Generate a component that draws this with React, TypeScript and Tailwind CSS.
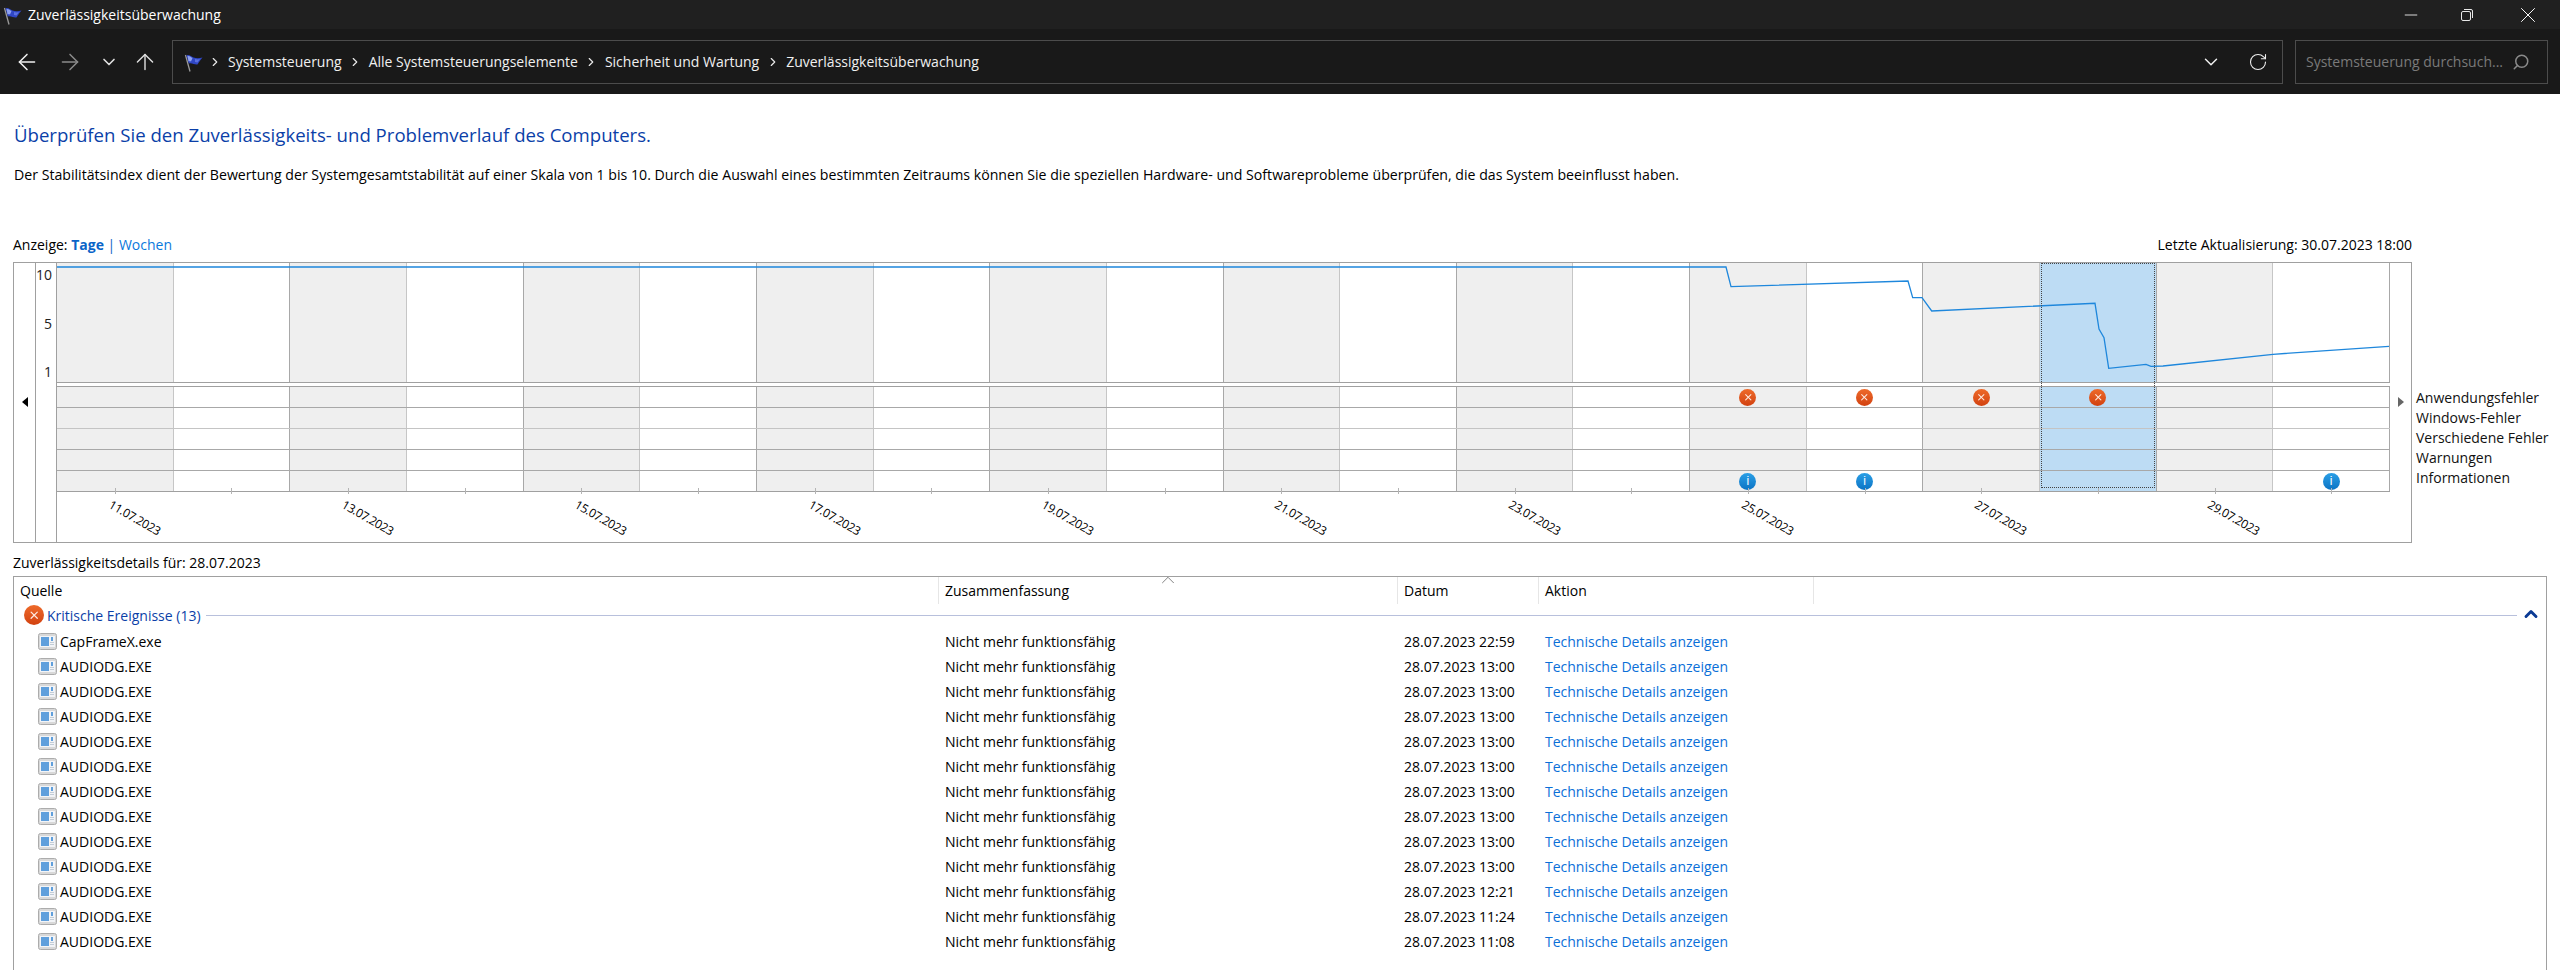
import { ChevronDown, ChevronUp, RotateCw, Search, ArrowLeft, ArrowRight, ArrowUp, Minus, X, ChevronRight } from "lucide-react";

const days = Array.from({ length: 20 }, (_, i) => i);
const dates: Record<number, string> = {
  0: "11.07.2023",
  2: "13.07.2023",
  4: "15.07.2023",
  6: "17.07.2023",
  8: "19.07.2023",
  10: "21.07.2023",
  12: "23.07.2023",
  14: "25.07.2023",
  16: "27.07.2023",
  18: "29.07.2023",
};

const rows = [
  ["CapFrameX.exe", "28.07.2023 22:59"],
  ["AUDIODG.EXE", "28.07.2023 13:00"],
  ["AUDIODG.EXE", "28.07.2023 13:00"],
  ["AUDIODG.EXE", "28.07.2023 13:00"],
  ["AUDIODG.EXE", "28.07.2023 13:00"],
  ["AUDIODG.EXE", "28.07.2023 13:00"],
  ["AUDIODG.EXE", "28.07.2023 13:00"],
  ["AUDIODG.EXE", "28.07.2023 13:00"],
  ["AUDIODG.EXE", "28.07.2023 13:00"],
  ["AUDIODG.EXE", "28.07.2023 13:00"],
  ["AUDIODG.EXE", "28.07.2023 12:21"],
  ["AUDIODG.EXE", "28.07.2023 11:24"],
  ["AUDIODG.EXE", "28.07.2023 11:08"],
];

function Flag({ size = 20 }: { size?: number }) {
  return (
    <svg width={size} height={size} viewBox="0 0 20 20">
      <path d="M2.5 3 L7 19.5" stroke="#9a9a9a" strokeWidth="1.3" />
      <path d="M3.5 3.5 C6 2 8 4.5 10.5 5.5 C13.5 6.5 16 6.5 19.5 5.5 C17.5 8 16 10 14.5 12.5 C11.5 13 9 10.5 5.8 11.5 Z" fill="#2f46c4" />
      <path d="M4.5 4 C6.5 3.5 8 5 9.5 6 L8 9.5 C7 9 6 9 5.5 9.5 Z" fill="#8ea2f2" />
      <path d="M12 7 C14 7.5 15.5 7.5 17 7 L14.5 10.5 L12 10 Z" fill="#5a70e0" />
    </svg>
  );
}

function ErrorDot({ size = 17 }: { size?: number }) {
  return (
    <div
      style={{ width: size, height: size }}
      className="flex items-center justify-center rounded-full bg-gradient-to-b from-[#ee6a2a] to-[#d2410f]"
    >
      <X size={size * 0.62} strokeWidth={2.4} className="text-[#fde9df]" />
    </div>
  );
}

function InfoDot() {
  return (
    <div className="flex h-[17px] w-[17px] items-center justify-center rounded-full bg-gradient-to-b from-[#2a9fe6] to-[#0b74c4] font-['Liberation_Sans',sans-serif] text-[12px] leading-none text-white">
      i
    </div>
  );
}

function AppIcon() {
  return (
    <svg width="19" height="17" viewBox="0 0 19 17">
      <rect x="0.5" y="0.5" width="18" height="16" rx="2" fill="#d8d8d8" stroke="#acacac" />
      <rect x="2" y="3" width="15" height="11" fill="#f2f4f7" />
      <rect x="3" y="4" width="8" height="9" fill="#5f9fdc" />
      <rect x="13" y="4" width="2" height="4" fill="#5f9fdc" />
      <rect x="12" y="9" width="4" height="1" fill="#c2ccd6" />
      <rect x="12" y="11" width="4" height="1" fill="#c2ccd6" />
    </svg>
  );
}

function Sep() {
  return <ChevronRight size={14} strokeWidth={2} className="mx-[6.5px] text-[#e8e8e8]" />;
}

function ChartRow({ errors = [], infos = [], border = "border-[#a8a8a8]" }: { errors?: number[]; infos?: number[]; border?: string }) {
  return (
    <div className={`grid h-[21px] grid-cols-[repeat(20,1fr)] border-b ${border}`}>
      {days.map((d) => (
        <div key={d} className={`flex items-center justify-center border-r ${d % 2 === 0 ? "border-[#c6c6c6]" : "border-[#a8a8a8]"} ${d === 17 ? "bg-[#bddcf4]" : d % 2 === 0 ? "bg-[#efefef]" : "bg-white"}`}>
          {errors.includes(d) && <ErrorDot />}
          {infos.includes(d) && <InfoDot />}
        </div>
      ))}
    </div>
  );
}

function Chart() {
  return (
    <div className="ml-[13px] flex">
      <div className="flex h-[281px] w-[2399px] border border-[#a0a0a0]">
        <div className="flex w-[22px] justify-center border-r border-[#a0a0a0] pt-[134px]">
          <div className="h-0 w-0 border-y-[5px] border-r-[6px] border-y-transparent border-r-black" />
        </div>
        <div className="w-[21px] border-r border-[#a0a0a0] pr-[4px] text-right text-[14px] leading-[48.5px] text-[#222]">
          <div className="-mt-[12px]">10</div>
          <div>5</div>
          <div>1</div>
        </div>
        <div className="relative w-[2333px]">
          <div className="grid h-[120px] grid-cols-[repeat(20,1fr)] border-b border-[#a0a0a0]">
            {days.map((d) => (
              <div key={d} className={`border-r ${d % 2 === 0 ? "border-[#c6c6c6]" : "border-[#a8a8a8]"} ${d === 17 ? "bg-[#bddcf4]" : d % 2 === 0 ? "bg-[#efefef]" : "bg-white"}`} />
            ))}
          </div>
          <div className="h-[4px] border-b border-[#a0a0a0]" />
          <ChartRow errors={[14, 15, 16, 17]} />
          <ChartRow border="border-[#c4c4c4]" />
          <ChartRow />
          <ChartRow />
          <ChartRow infos={[14, 15, 19]} border="border-[#a0a0a0]" />
          <div className="grid h-[50px] grid-cols-[repeat(20,1fr)]">
            {days.map((d) => (
              <div key={d} className="flex flex-col items-center">
                <div className="-mt-[4px] h-[6px] w-px bg-[#b4b4b4]" />
                {dates[d] && (
                  <div className="mt-[16px] translate-x-[19px] rotate-[30deg] text-[12px] leading-[16px] tracking-[-0.4px] whitespace-nowrap text-black">
                    {dates[d]}
                  </div>
                )}
              </div>
            ))}
          </div>
          {/* Stabilitaetslinie liegt ueber den Tagesspalten */}
          <svg className="pointer-events-none absolute top-0 left-0" width="2332" height="120" viewBox="57 263 2332 120">
            <polyline
              fill="none"
              stroke="#1e87dc"
              strokeWidth="1.3"
              points="57,267 1726,267 1731,286.7 1908,281 1912.7,297.7 1922,297.7 1931.7,311 2095,303.3 2099,329 2104,337.7 2108.7,368.3 2146,364.3 2151,366.3 2163,366 2273,354.3 2389,346.3"
            />
          </svg>
          <div className="pointer-events-none absolute top-0 left-[1984px] h-[225px] w-[114px] border border-dotted border-[#444]" />
        </div>
        <div className="flex w-[21px] justify-center pt-[134px]">
          <div className="h-0 w-0 border-y-[5px] border-l-[6px] border-y-transparent border-l-[#666]" />
        </div>
      </div>
      <div className="ml-[4px] pt-[126px] text-[14px] leading-[20px] whitespace-nowrap text-[#111]">
        <div>Anwendungsfehler</div>
        <div>Windows-Fehler</div>
        <div>Verschiedene Fehler</div>
        <div>Warnungen</div>
        <div>Informationen</div>
      </div>
    </div>
  );
}

function DetailsList() {
  return (
    <div className="mx-[13px] mt-[3px] flex-1 border-x border-t border-[#a0a0a0]">
      <div className="relative flex h-[27px] items-center text-[14px] text-black">
        <div className="w-[924px] pl-[6px]">Quelle</div>
        <div className="h-full w-[459px] border-l border-[#e6e6e6] pl-[6px] leading-[27px]">Zusammenfassung</div>
        <div className="h-full w-[141px] border-l border-[#e6e6e6] pl-[6px] leading-[27px]">Datum</div>
        <div className="h-full w-[276px] border-x border-[#e6e6e6] pl-[6px] leading-[27px]">Aktion</div>
        <ChevronUp size={22} strokeWidth={1} className="absolute -top-[8px] left-[1143px] text-[#777]" />
      </div>
      <div className="flex h-[22px] items-center pr-[5px] pl-[10px]">
        <ErrorDot size={20} />
        <span className="ml-[3px] text-[14px] text-[#0b3fa8]">Kritische Ereignisse (13)</span>
        <div className="mr-[4px] ml-[5px] h-px flex-1 bg-[#b8c0dc]" />
        <ChevronUp size={20} strokeWidth={3.5} className="-mt-[3px] text-[#0b3a94]" />
      </div>
      <div className="mt-[3px]">
        {rows.map(([name, date], i) => (
          <div key={i} className="flex h-[25px] items-center text-[14px] text-black">
            <div className="flex w-[924px] items-center pl-[24px]">
              <AppIcon />
              <span className="ml-[3px]">{name}</span>
            </div>
            <div className="w-[459px] pl-[7px]">Nicht mehr funktionsfähig</div>
            <div className="w-[141px] pl-[7px]">{date}</div>
            <div className="pl-[7px] text-[#0a6fd8]">Technische Details anzeigen</div>
          </div>
        ))}
      </div>
    </div>
  );
}

export default function App() {
  return (
    <div className="flex h-[970px] w-[2560px] flex-col overflow-hidden bg-white font-['Open_Sans',sans-serif]">
      <div className="flex h-[29px] items-center bg-[#202020] text-white">
        <div className="ml-[2px]"><Flag size={20} /></div>
        <div className="ml-[6px] flex-1 text-[14px]">Zuverlässigkeitsüberwachung</div>
        <Minus size={20} strokeWidth={1} className="mr-[39px] text-white" />
        <svg width="14" height="14" viewBox="0 0 14 14" className="mr-[41px]" fill="none" stroke="#e8e8e8">
          <rect x="1.5" y="3.5" width="9" height="9" rx="1.5" />
          <path d="M4 1.5 H11 Q12.5 1.5 12.5 3 V10" />
        </svg>
        <X size={26} strokeWidth={0.9} className="mr-[19px] text-white" />
      </div>
      <div className="flex h-[65px] items-center bg-[#191919] text-white">
        <ArrowLeft size={26} strokeWidth={1.4} className="ml-[14px] text-[#f0f0f0]" />
        <ArrowRight size={26} strokeWidth={1.4} className="ml-[17px] text-[#8a8a8a]" />
        <ChevronDown size={20} strokeWidth={2} className="ml-[16px] text-[#e0e0e0]" />
        <ArrowUp size={26} strokeWidth={1.3} className="ml-[13px] text-[#e0e0e0]" />
        <div className="ml-[14px] flex h-[44px] w-[2111px] items-center border border-[#4c4c4c] pr-[14px] pl-[10px] text-[14px] text-[#f0f0f0]">
          <Flag size={20} />
          <ChevronRight size={14} strokeWidth={2} className="mr-[6px] ml-[5px] text-[#e8e8e8]" />
          <span>Systemsteuerung</span>
          <Sep />
          <span>Alle Systemsteuerungselemente</span>
          <Sep />
          <span>Sicherheit und Wartung</span>
          <Sep />
          <span>Zuverlässigkeitsüberwachung</span>
          <ChevronDown size={22} strokeWidth={1.6} className="mr-[26px] ml-auto" />
          <RotateCw size={20} strokeWidth={1.3} />
        </div>
        <div className="ml-[12px] flex h-[44px] w-[253px] items-center justify-between border border-[#4c4c4c] pr-[17px] pl-[10px] text-[14px] text-[#7a7a7a]">
          <span>Systemsteuerung durchsuch...</span>
          <Search size={18} strokeWidth={2} className="-scale-x-100 text-[#8a8a8a]" />
        </div>
      </div>
      <h1 className="mt-[27px] ml-[14px] text-[18.6px] leading-[27px] font-normal text-[#0b3fa8]">
        Überprüfen Sie den Zuverlässigkeits- und Problemverlauf des Computers.
      </h1>
      <p className="mt-[17px] ml-[14px] text-[14.15px] leading-[20px] text-black">
        Der Stabilitätsindex dient der Bewertung der Systemgesamtstabilität auf einer Skala von 1 bis 10. Durch die Auswahl eines bestimmten Zeitraums können Sie die speziellen Hardware- und Softwareprobleme überprüfen, die das System beeinflusst haben.
      </p>
      <div className="mx-[13px] mt-[49px] flex h-[20px] w-[2399px] items-center justify-between text-[14px] text-black">
        <div>
          Anzeige: <b className="font-bold text-[#0a64c8]">Tage</b> <span className="text-[#0a64c8]">|</span> <span className="text-[#0a78dc]">Wochen</span>
        </div>
        <div>Letzte Aktualisierung: 30.07.2023 18:00</div>
      </div>
      <div className="mt-[8px]"><Chart /></div>
      <div className="mt-[10px] ml-[13px] h-[20px] text-[14px] leading-[20px] text-black">Zuverlässigkeitsdetails für: 28.07.2023</div>
      <DetailsList />
    </div>
  );
}
